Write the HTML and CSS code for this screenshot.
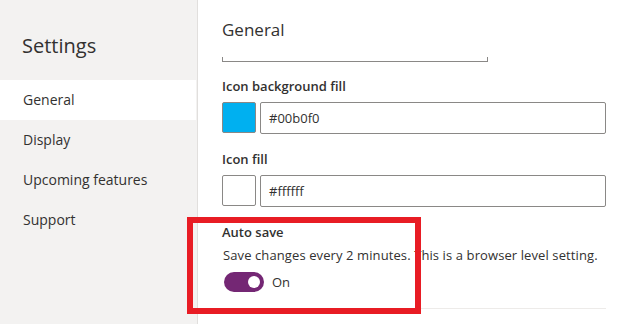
FILE: index.html
```html
<!DOCTYPE html>
<html lang="en">
<head>
<meta charset="utf-8">
<title>Settings</title>
<link rel="stylesheet" href="styles.css">
</head>
<body>
<div class="app">
  <nav class="sidebar">
    <h1 class="title">Settings</h1>
    <ul class="nav">
      <li class="nav-item active">General</li>
      <li class="nav-item">Display</li>
      <li class="nav-item">Upcoming features</li>
      <li class="nav-item">Support</li>
    </ul>
  </nav>
  <main class="main">
    <h2 class="heading">General</h2>
    <div class="cut-input"></div>
    <div class="field field-first">
      <div class="label">Icon background fill</div>
      <div class="color-row">
        <span class="swatch swatch-blue"></span>
        <div class="text-input">#00b0f0</div>
      </div>
    </div>
    <div class="field">
      <div class="label">Icon fill</div>
      <div class="color-row">
        <span class="swatch swatch-white"></span>
        <div class="text-input">#ffffff</div>
      </div>
    </div>
    <div class="autosave">
      <div class="label">Auto save</div>
      <p class="desc">Save changes every 2 minutes. This is a browser level setting.</p>
      <div class="toggle-row">
        <span class="toggle"><span class="thumb"></span></span>
        <span class="toggle-text">On</span>
      </div>
    </div>
    <div class="divider"></div>
  </main>
  <div class="highlight"></div>
</div>
</body>
</html>
```

FILE: styles.css
```css
* { box-sizing: border-box; }
html, body { margin: 0; padding: 0; }
body {
  font-family: "Open Sans", "Noto Sans", sans-serif;
  color: #323130;
  background: #ffffff;
  width: 619px;
  height: 324px;
  overflow: hidden;
}
.app {
  position: relative;
  display: flex;
  height: 324px;
}
.sidebar {
  width: 198px;
  flex: none;
  background: #f3f2f1;
  border-right: 1px solid #e1dfdd;
  padding-right: 1px;
}
.title {
  margin: 0;
  padding: 32px 0 0 22px;
  height: 80px;
  font-size: 20px;
  font-weight: 400;
  line-height: 28px;
  color: #323130;
}
.nav {
  list-style: none;
  margin: 0;
  padding: 0;
}
.nav-item {
  height: 40px;
  line-height: 40px;
  padding-left: 23px;
  font-size: 14px;
  color: #323130;
}
.nav-item.active {
  background: #ffffff;
}
.main {
  flex: 1;
  padding: 0 13px 0 24px;
}
.heading {
  margin: 0;
  padding-top: 18px;
  font-size: 17px;
  font-weight: 400;
  line-height: 24px;
}
.cut-input {
  width: 266px;
  height: 5px;
  margin-top: 15px;
  border: 1px solid #8a8886;
  border-top: none;
}
.field-first { margin-top: 14px; }
.field { margin-bottom: 15px; }
.label {
  font-size: 13px;
  font-weight: 600;
  line-height: 20px;
}
.color-row {
  display: flex;
  gap: 4px;
  margin-top: 6px;
}
.swatch {
  width: 34px;
  height: 31px;
  border: 1px solid #8a8886;
  border-radius: 2px;
}
.swatch-blue { background: #00b0f0; }
.swatch-white { background: #ffffff; }
.text-input {
  flex: 1;
  height: 32px;
  border: 1px solid #8a8886;
  border-radius: 2px;
  padding: 0 8px;
  font-size: 13px;
  line-height: 30px;
}
.autosave { margin-top: 4px; }
.desc {
  margin: 3px 0 0 1px;
  font-size: 13px;
  line-height: 20px;
  letter-spacing: 0.1px;
}
.toggle-row {
  display: flex;
  align-items: center;
  gap: 8px;
  margin-top: 7px;
  margin-left: 2px;
}
.toggle {
  width: 40px;
  height: 20px;
  border-radius: 10px;
  background: #742774;
  display: flex;
  align-items: center;
  justify-content: flex-end;
  padding-right: 4px;
}
.thumb {
  width: 12px;
  height: 12px;
  border-radius: 50%;
  background: #ffffff;
}
.toggle-text {
  font-size: 13px;
  line-height: 20px;
}
.divider {
  margin-top: 16px;
  height: 1px;
  background: #edebe9;
}
.highlight {
  position: absolute;
  left: 187px;
  top: 217px;
  width: 234px;
  height: 97px;
  border: 6px solid #e81c24;
}
```
